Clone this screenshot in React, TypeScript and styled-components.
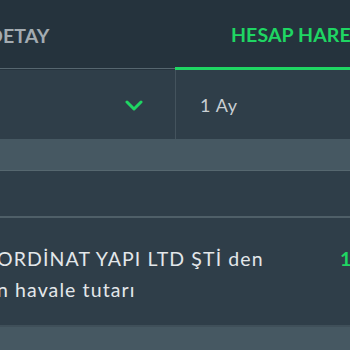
import styled, { createGlobalStyle } from 'styled-components';

const palette = {
  tabBg: '#25333d',
  panel: '#2f3e49',
  band: '#465862',
  line: '#56666f',
  green: '#1fd663',
  muted: '#a3abb1',
  text: '#e3e7ea',
};

const GlobalStyle = createGlobalStyle`
  html, body {
    margin: 0;
    padding: 0;
    background: ${palette.panel};
  }
  body {
    font-family: Lato, 'Open Sans', 'Noto Sans', sans-serif;
  }
`;

const ChevronDown = () => (
  <svg width="18" height="11" viewBox="0 0 18 11" fill="none">
    <path
      d="M2 2l7 7 7-7"
      stroke={palette.green}
      strokeWidth="3"
      strokeLinecap="round"
      strokeLinejoin="round"
    />
  </svg>
);

const App = () => {
  return (
    <>
      <GlobalStyle />
      <Screen>
        <TabBar>
          <Tab>
            <TabLabel $offset={-12}>DETAY</TabLabel>
          </Tab>
          <Tab $active>
            <TabLabel $offset={56} $active>
              HESAP HAREKETLERİ
            </TabLabel>
          </Tab>
        </TabBar>
        <FilterRow>
          <FilterCell>
            <ChevronSlot>
              <ChevronDown />
            </ChevronSlot>
          </FilterCell>
          <FilterCell>
            <FilterValue>1 Ay</FilterValue>
          </FilterCell>
        </FilterRow>
        <Band />
        <EmptyRow />
        <TransactionRow>
          <Description>
            <span>ORDİNAT YAPI LTD ŞTİ den</span>
            <span>n havale tutarı</span>
          </Description>
          <Amount>1</Amount>
        </TransactionRow>
        <Band $tall />
      </Screen>
    </>
  );
};

const Screen = styled.div`
  width: 350px;
  height: 350px;
  overflow: hidden;
  background: ${palette.panel};
  display: flex;
  flex-direction: column;
`;

const TabBar = styled.div`
  display: flex;
  height: 70px;
  flex-shrink: 0;
  background: ${palette.tabBg};
`;

const Tab = styled.div<{ $active?: boolean }>`
  flex: 0 0 175px;
  display: flex;
  align-items: center;
  overflow: hidden;
  box-sizing: border-box;
  padding-top: 2px;
  border-bottom: ${(p) =>
    p.$active ? `3px solid ${palette.green}` : `1px solid ${palette.line}`};
  margin-bottom: ${(p) => (p.$active ? '0' : '1px')};
`;

const TabLabel = styled.span<{ $offset: number; $active?: boolean }>`
  margin-left: ${(p) => p.$offset}px;
  white-space: nowrap;
  font-size: 19.5px;
  font-weight: 700;
  letter-spacing: 0.1px;
  color: ${(p) => (p.$active ? palette.green : palette.muted)};
`;

const FilterRow = styled.div`
  display: flex;
  height: 69px;
  flex-shrink: 0;
  background: ${palette.panel};
`;

const FilterCell = styled.div`
  flex: 0 0 175px;
  box-sizing: border-box;
  display: flex;
  align-items: center;
  & + & {
    border-left: 1px solid #44535d;
    padding-left: 24px;
  }
`;

const ChevronSlot = styled.div`
  margin-left: 125px;
  display: flex;
  padding-top: 2px;
`;

const FilterValue = styled.span`
  font-size: 18px;
  letter-spacing: 0.6px;
  color: #c9cfd3;
`;

const Band = styled.div<{ $tall?: boolean }>`
  height: ${(p) => (p.$tall ? '26px' : '31px')};
  flex-shrink: 0;
  background: ${palette.band};
  border-bottom: ${(p) => (p.$tall ? 'none' : `1px solid #56676f`)};
  border-top: ${(p) => (p.$tall ? `2px solid #3f4f59` : 'none')};
`;

const EmptyRow = styled.div`
  height: 45px;
  flex-shrink: 0;
  background: ${palette.panel};
  border-bottom: 2px solid #4f5f68;
`;

const TransactionRow = styled.div`
  display: flex;
  align-items: center;
  height: 107px;
  flex-shrink: 0;
  background: ${palette.panel};
`;

const Description = styled.div`
  flex: 0 0 340px;
  display: flex;
  flex-direction: column;
  margin-left: -3px;
  padding-top: 4px;
  font-size: 19.5px;
  letter-spacing: 1.1px;
  line-height: 31px;
  color: ${palette.text};
  white-space: nowrap;
`;

const Amount = styled.div`
  margin-left: 3px;
  margin-top: -26px;
  font-size: 19.5px;
  font-weight: 700;
  color: ${palette.green};
`;

export default App;
